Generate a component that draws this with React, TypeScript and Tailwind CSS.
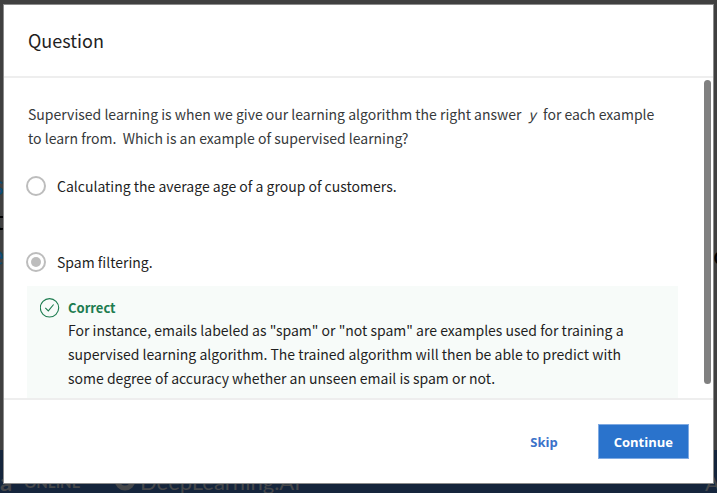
import { useState } from "react";

const sans = "font-['Noto_Sans_CJK_SC',sans-serif]";

function Backdrop() {
  return (
    <div aria-hidden="true" className="flex h-full flex-col overflow-hidden bg-[#404040] select-none">
      <div className="flex flex-1 justify-between overflow-hidden pt-[166px] text-[26px] leading-[35px]">
        <div className="flex w-1 flex-col items-end text-[#0d4a75]">
          <span>s</span>
          <span className="text-black">t</span>
          <span>e</span>
        </div>
        <div className="w-1 pt-[70px] text-black">o</div>
      </div>
      <div className="flex h-[43px] items-end justify-between overflow-hidden bg-[#15253c] pb-0.5 text-[#45474a]">
        <div className="flex items-center gap-3 font-['Lato',sans-serif] leading-4">
          <span className="flex w-[78px] items-center gap-3 font-bold whitespace-nowrap">
            <span className="text-[24px]">a</span>
            <span className="text-[15px]">ONLINE</span>
          </span>
          <span className="ml-6 flex items-center gap-1 text-[22px]">
            <svg viewBox="0 0 22 18" className="h-[18px] w-[22px]" fill="none" stroke="currentColor">
              <circle cx="11" cy="7" r="8" strokeWidth="5" />
              <circle cx="11" cy="7" r="3" strokeWidth="2" />
            </svg>
            DeepLearning.AI
          </span>
        </div>
        <span className="w-3 font-['Lato',sans-serif] text-[22px] leading-4">A</span>
      </div>
    </div>
  );
}

function Option({ id, label, checked, onSelect }: { id: string; label: string; checked: boolean; onSelect: () => void }) {
  return (
    <label htmlFor={id} className="flex items-center gap-[11px] leading-6 text-[#1f1f1f]">
      <span className="grid size-5 shrink-0 place-items-center">
        <input
          id={id}
          type="radio"
          name="answer"
          checked={checked}
          onChange={onSelect}
          className="peer col-start-1 row-start-1 size-5 appearance-none rounded-full border-2 border-[#bdbdbd] bg-white"
        />
        <span className="pointer-events-none col-start-1 row-start-1 hidden size-[10px] rounded-full bg-[#bdbdbd] peer-checked:block" />
      </span>
      {label}
    </label>
  );
}

export default function App() {
  const [answer, setAnswer] = useState("spam");
  return (
    <div className={`relative h-screen overflow-hidden ${sans}`}>
      <Backdrop />
      <div
        role="dialog"
        aria-labelledby="title"
        className="absolute inset-x-[3px] top-1 bottom-[9px] flex flex-col border border-[#8c8c8c] bg-white"
      >
        <header className="flex h-[73px] shrink-0 items-center border-b-2 border-[#eeeeee] px-6 pb-0.5">
          <h1 id="title" className="text-[18px] leading-6 text-[#1f1f1f]">Question</h1>
        </header>
        <main className="flex min-h-0 flex-1 justify-between overflow-hidden text-[14px] leading-6">
          <div className="flex-1 pt-6 pl-6">
            <p className="pr-2 whitespace-pre-wrap text-[#373a3c]">
              {"Supervised learning is when we give our learning algorithm the right answer "}
              <em className="px-1">y</em>
              {" for each example to learn from.  Which is an example of supervised learning?"}
            </p>
            <fieldset className="-ml-[2px] flex flex-col gap-[52px] pt-6">
              <Option
                id="average"
                label="Calculating the average age of a group of customers."
                checked={answer === "average"}
                onSelect={() => setAnswer("average")}
              />
              <Option id="spam" label="Spam filtering." checked={answer === "spam"} onSelect={() => setAnswer("spam")} />
            </fieldset>
            <section className="mt-3 -ml-px flex gap-2 bg-[#f7fbf9] pt-3 pr-8 pb-6 pl-[13px]">
              <svg viewBox="0 0 20 20" className="size-5 shrink-0" fill="none" stroke="#1d7c50">
                <circle cx="9.5" cy="9.8" r="9.2" strokeWidth="1.1" />
                <path d="M5.3 9.9 8.3 12.9 13.6 6.5" strokeWidth="1.1" />
              </svg>
              <div className="text-[#1f1f1f]">
                <h2 className="text-[13px] leading-5 font-bold text-[#1d7c50]">Correct</h2>
                <p>
                  For instance, emails labeled as "spam" or "not spam" are examples used for training a supervised
                  learning algorithm. The trained algorithm will then be able to predict with some degree of accuracy
                  whether an unseen email is spam or not.
                </p>
              </div>
            </section>
          </div>
          <div className="ml-[26px] flex w-[9px] shrink-0 pt-[2px] pb-[14px]">
            <div className="w-[7px] rounded-full bg-[#808080]" />
          </div>
        </main>
        <footer className="flex h-[85px] shrink-0 items-center justify-end gap-10 border-t-2 border-[#eeeeee] pr-6 font-['Open_Sans',sans-serif] text-[13px] leading-5 font-bold">
          <button type="button" className="text-[#3b72c9]">Skip</button>
          <button type="button" className="h-[35px] border border-[#7faae2] bg-[#2a73cc] px-[15px] text-white">
            Continue
          </button>
        </footer>
      </div>
    </div>
  );
}
